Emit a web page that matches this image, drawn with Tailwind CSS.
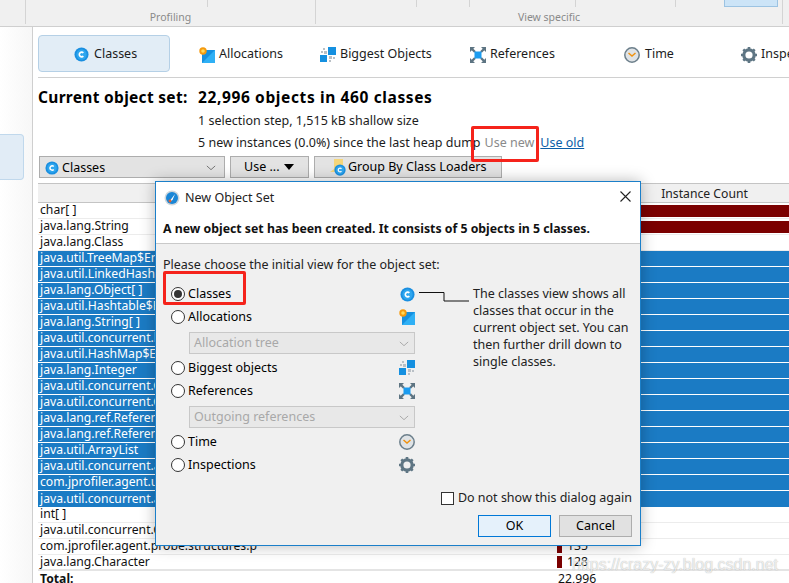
<!DOCTYPE html>
<html><head><meta charset="utf-8"><script src="https://cdn.jsdelivr.net/npm/@tailwindcss/browser@4"></script></head>
<body class="relative w-[789px] h-[583px] overflow-hidden bg-white font-['Noto_Sans','Open_Sans',sans-serif] text-[12.5px] leading-none text-black">
<svg class="hidden"><defs>
<symbol id="c" viewBox="0 0 16 16"><circle cx="8" cy="8" r="7.5" fill="#1a8fe0"/><circle cx="8" cy="8" r="5.5" fill="#2ea6ee"/><path d="M10 6.3A2.5 2.5 0 1 0 10 9.7" fill="none" stroke="#fff" stroke-width="1.7"/></symbol>
<symbol id="a" viewBox="0 0 16 16"><rect x="3" y="3" width="13" height="13" fill="#1590e0"/><path d="M16 3V16H3Z" fill="#2fb0f5"/><circle cx="4" cy="4" r="3.7" fill="#f59a0e"/><circle cx="4" cy="4" r="1.8" fill="#ffd95a"/></symbol>
<symbol id="b" viewBox="0 0 16 16"><rect x="8" y="0" width="8" height="8" fill="#1590e0"/><rect x="0" y="8" width="7" height="7" fill="#1590e0"/><g fill="#b9c0c6"><rect x="3" y="1" width="2" height="2"/><rect x="1" y="4" width="2" height="2"/><rect x="4" y="4" width="3" height="3"/><rect x="9" y="9" width="3" height="3"/><rect x="13" y="10" width="2" height="2"/><rect x="9" y="13" width="2" height="2"/></g></symbol>
<symbol id="r" viewBox="0 0 16 16"><g stroke="#5d7482" stroke-width="2.4" fill="none"><path d="M1 1L5 5M15 1L11 5M1 15L5 11M15 15L11 11"/></g><g fill="#5d7482"><path d="M0 0H5L0 5ZM16 0H11L16 5ZM0 16H5L0 11ZM16 16H11L16 11Z"/></g><rect x="4.5" y="4.5" width="7" height="7" fill="#1b9cf0"/></symbol>
<symbol id="t" viewBox="0 0 16 16"><circle cx="8" cy="8" r="7.2" fill="#dfe3e6" stroke="#6c7f8b" stroke-width="1.5"/><path d="M4.5 6L8 9L11.5 6" fill="none" stroke="#f0920f" stroke-width="1.5"/></symbol>
<symbol id="g" viewBox="0 0 16 16"><circle cx="8" cy="8" r="5.2" fill="none" stroke="#5f7684" stroke-width="3.2"/><g stroke="#5f7684" stroke-width="2.6"><path d="M8 0V3M8 13V16M0 8H3M13 8H16M2.3 2.3L4.4 4.4M11.6 11.6L13.7 13.7M13.7 2.3L11.6 4.4M4.4 11.6L2.3 13.7"/></g></symbol>
<symbol id="v" viewBox="0 0 12 7"><path d="M1 1L6 5.5L11 1" fill="none" stroke="currentColor" stroke-width="1.2"/></symbol>
</defs></svg>

<!-- top ribbon -->
<header class="h-[27px] bg-[#f0f0f0] border-b border-[#cfcfcf] flex text-[10.5px] text-[#8a8a8a]">
  <div class="w-[26px] shrink-0 h-6 border-r border-[#d4d4d4]"></div>
  <div class="w-[290px] shrink-0 h-6 border-r border-[#d4d4d4] relative text-center pt-[12px]"><span>Profiling</span><i class="absolute left-[181px] top-0 h-[7px] border-r border-[#d4d4d4]"></i></div>
  <div class="w-[467px] shrink-0 h-6 border-r border-[#d4d4d4] relative text-center pt-[12px]"><span>View specific</span><i class="absolute left-[100px] top-0 h-[7px] border-r border-[#d4d4d4]"></i><i class="absolute left-[153px] top-0 h-[7px] border-r border-[#d4d4d4]"></i><i class="absolute left-[259px] top-0 h-[7px] border-r border-[#d4d4d4]"></i><i class="absolute left-[359px] top-0 h-[7px] border-r border-[#d4d4d4]"></i><i class="absolute left-[408px] top-0 w-[54px] h-[7px] bg-[#cce4f7] border border-t-0 border-[#9cc3e2]"></i></div>
</header>

<div class="flex h-[556px]">
  <!-- sidebar -->
  <aside class="w-[33px] shrink-0 border-r border-[#cfcfcf] bg-gradient-to-r from-white to-[#f7f7f7] pt-[107px]">
    <div class="w-6 h-[46px] bg-[#e1ecf6] border border-l-0 border-[#c0d8ec] rounded-r-sm"></div>
  </aside>

  <main class="flex-1 min-w-0 pl-[5px] pt-2">
    <!-- tabs -->
    <nav class="flex items-center h-[37px] text-[#1c1c1c] whitespace-nowrap">
      <div class="w-[132px] shrink-0 h-[37px] pt-[2px] bg-[#e2edf6] border border-[#b5d0e6] rounded-sm flex items-center pl-[35px] gap-[5px]"><svg class="w-[15px] h-[15px]"><use href="#c"/></svg>Classes</div>
      <div class="ml-[29px] w-[121px] pt-[2px] shrink-0 flex items-center gap-1"><svg class="w-4 h-4"><use href="#a"/></svg>Allocations</div>
      <div class="flex items-center pt-[2px] gap-[4px] w-[150px] shrink-0"><svg class="w-4 h-4"><use href="#b"/></svg>Biggest Objects</div>
      <div class="flex items-center pt-[2px] gap-1 w-[154px] shrink-0"><svg class="w-4 h-4"><use href="#r"/></svg>References</div>
      <div class="flex items-center pt-[2px] gap-[5px] w-[117px] shrink-0"><svg class="w-4 h-4"><use href="#t"/></svg>Time</div>
      <div class="flex items-center pt-[2px] gap-1 shrink-0"><svg class="w-4 h-4 shrink-0"><use href="#g"/></svg>Inspections</div>
    </nav>
    <div class="mt-[5px] border-t border-[#d0d0d0] w-[800px]"></div>

    <!-- summary -->
    <div class="flex mt-[12px] font-bold text-[15.5px] h-[16px] items-center whitespace-nowrap"><span class="w-[160px] tracking-[0.3px]">Current object set:</span><span class="tracking-[0.62px]">22,996 objects in 460 classes</span></div>
    <div class="ml-[160px] mt-[5px] h-[21px] flex items-center text-[#1c1c1c]">1 selection step, 1,515 kB shallow size</div>
    <div class="ml-[160px] h-[21px] pt-[2px] flex items-center text-[#1c1c1c] whitespace-nowrap">5 new instances (0.0%) since the last heap dump<span class="ml-[4px] text-[#8a8a8a]">Use new</span><span class="ml-[6px] text-[#0b5ea8] underline">Use old</span></div>

    <!-- controls -->
    <div class="flex mt-[3px] h-[22px] gap-[5px]">
      <div class="w-[186px] ml-px pt-[2px] bg-[#e3e3e3] border border-[#adadad] flex items-center pl-[5px] gap-[3px]"><svg class="w-[14px] h-[14px]"><use href="#c"/></svg>Classes<svg class="ml-auto mr-2 w-[10px] h-[6px] text-[#777]"><use href="#v"/></svg></div>
      <div class="w-[79px] bg-[#e3e3e3] border border-[#adadad] flex items-center pl-[13px] gap-[5px]">Use ...<span class="w-0 h-0 border-x-[5px] border-x-transparent border-t-[6px] border-t-black"></span></div>
      <div class="w-[188px] bg-[#e3e3e3] border border-[#adadad] flex items-center pl-[14px] gap-[1px] whitespace-nowrap"><svg class="w-[18px] h-[18px]" viewBox="0 0 18 18"><path d="M5 1H14V14H1L5 11Z" fill="#f5d67b"/><use href="#c" x="5" y="6" width="12" height="12"/></svg>Group By Class Loaders</div>
    </div>

    <!-- table -->
    <section class="mt-[5px] w-[830px] text-[12.2px] text-[#111]">
      <div class="flex h-5 pt-[2px] bg-[#f0f0f0] border-y border-[#c4c4c4] items-center"><div class="w-[519px] shrink-0"></div><div class="w-[295px] shrink-0 text-center text-[#222]">Instance Count</div></div>
      <div class="flex h-4 border-b border-[#ececec] items-center"><div class="w-[519px] shrink-0 pl-[2px]">char[ ]</div><div class="flex-1 h-3 bg-[#7b0000]"></div></div>
      <div class="flex h-4 border-b border-[#ececec] items-center"><div class="w-[519px] shrink-0 pl-[2px]">java.lang.String</div><div class="flex-1 h-3 bg-[#7b0000]"></div></div>
      <div class="flex h-4 border-b border-[#ececec] items-center"><div class="w-[519px] shrink-0 pl-[2px]">java.lang.Class</div></div>
      <div class="text-white">
        <div class="h-4 bg-[#1b7bc4] border-b border-white pl-[2px] flex items-center">java.util.TreeMap$Entry</div>
        <div class="h-4 bg-[#1b7bc4] border-b border-white pl-[2px] flex items-center">java.util.LinkedHashMap$Entry</div>
        <div class="h-4 bg-[#1b7bc4] border-b border-white pl-[2px] flex items-center">java.lang.Object[ ]</div>
        <div class="h-4 bg-[#1b7bc4] border-b border-white pl-[2px] flex items-center">java.util.Hashtable$Entry</div>
        <div class="h-4 bg-[#1b7bc4] border-b border-white pl-[2px] flex items-center">java.lang.String[ ]</div>
        <div class="h-4 bg-[#1b7bc4] border-b border-white pl-[2px] flex items-center">java.util.concurrent.locks</div>
        <div class="h-4 bg-[#1b7bc4] border-b border-white pl-[2px] flex items-center">java.util.HashMap$Entry</div>
        <div class="h-4 bg-[#1b7bc4] border-b border-white pl-[2px] flex items-center">java.lang.Integer</div>
        <div class="h-4 bg-[#1b7bc4] border-b border-white pl-[2px] flex items-center">java.util.concurrent.Concurrent</div>
        <div class="h-4 bg-[#1b7bc4] border-b border-white pl-[2px] flex items-center">java.util.concurrent.Concurrent</div>
        <div class="h-4 bg-[#1b7bc4] border-b border-white pl-[2px] flex items-center">java.lang.ref.Reference</div>
        <div class="h-4 bg-[#1b7bc4] border-b border-white pl-[2px] flex items-center">java.lang.ref.Reference</div>
        <div class="h-4 bg-[#1b7bc4] border-b border-white pl-[2px] flex items-center">java.util.ArrayList</div>
        <div class="h-4 bg-[#1b7bc4] border-b border-white pl-[2px] flex items-center">java.util.concurrent.atomic</div>
        <div class="h-4 bg-[#1b7bc4] border-b border-white pl-[2px] flex items-center">com.jprofiler.agent.util</div>
        <div class="h-4 bg-[#1b7bc4] pl-[2px] flex items-center">java.util.concurrent.atomic</div>
      </div>
      <div class="flex h-4 border-b border-[#ececec] items-center"><div class="w-[519px] shrink-0 pl-[2px]">int[ ]</div></div>
      <div class="flex h-4 border-b border-[#ececec] items-center"><div class="w-[519px] shrink-0 pl-[2px]">java.util.concurrent.Concurrent</div></div>
      <div class="flex h-4 border-b border-[#ececec] items-center"><div class="w-[519px] shrink-0 pl-[2px]">com.jprofiler.agent.probe.structures.p</div><div class="w-[5px] h-3 bg-[#7b0000]"></div><div class="ml-[5px]">135</div></div>
      <div class="flex h-4 border-b-2 border-[#e4e4e4] items-center"><div class="w-[519px] shrink-0 pl-[2px]">java.lang.Character</div><div class="w-[5px] h-3 bg-[#7b0000]"></div><div class="ml-[5px]">128</div></div>
      <div class="flex h-4 items-center font-bold"><div class="w-[519px] shrink-0 pl-[2px]">Total:</div><div class="font-normal ml-px">22,996</div></div>
    </section>
  </main>
</div>

<!-- dialog -->
<div class="absolute left-[155px] top-[181px] w-[486px] h-[365px] bg-[#f0f0f0] border border-[#1b7fc9] shadow-[0_0_14px_rgba(0,0,0,0.28)] flex flex-col">
  <div class="bg-white h-[62px] border-b border-[#c9c9c9] shrink-0 px-[7px]">
    <div class="h-[30px] pt-[2px] flex items-center gap-[5px] relative">
      <svg class="w-4 h-4 ml-px" viewBox="0 0 16 16"><circle cx="8" cy="8" r="7.5" fill="#cfd6db"/><circle cx="8" cy="8" r="6" fill="#1a86d6"/><path d="M5 12L11 4L8.5 10Z" fill="#fff"/><circle cx="6" cy="11" r="1.4" fill="#e8602c"/></svg>
      <span class="text-[12.5px] text-[#222]">New Object Set</span>
      <svg class="absolute right-[2px] top-[9px] w-[11px] h-[11px]" viewBox="0 0 11 11"><path d="M.5.5L10.5 10.5M10.5.5L.5 10.5" stroke="#222" stroke-width="1.1"/></svg>
    </div>
    <div class="font-bold text-[12.3px] mt-[11px] text-[#111] whitespace-nowrap">A new object set has been created. It consists of 5 objects in 5 classes.</div>
  </div>
  <div class="flex-1 px-[7px] relative">
    <div class="mt-[15px] text-[#222]">Please choose the initial view for the object set:</div>
    <div class="mt-[11px] flex gap-[58px]">
      <div class="w-[252px] pl-[8px] shrink-0">
        <div class="h-[23px] flex items-center gap-[3px]"><span class="w-[14px] h-[14px] rounded-full border border-[#333] bg-white flex items-center justify-center"><span class="w-2 h-2 rounded-full bg-[#333]"></span></span>Classes<svg class="ml-auto w-[15px] h-[15px]"><use href="#c"/></svg></div>
        <div class="h-[23px] flex items-center gap-[3px]"><span class="w-[14px] h-[14px] rounded-full border border-[#333] bg-white"></span>Allocations<svg class="ml-auto w-4 h-4"><use href="#a"/></svg></div>
        <div class="ml-[18px] mt-[3px] h-[22px] pt-[2px] bg-[#e8e8e8] border border-[#c8c8c8] flex items-center pl-[4px] text-[#a8a8a8]">Allocation tree<svg class="ml-auto mr-[5px] w-[10px] h-[6px] text-[#aaa]"><use href="#v"/></svg></div>
        <div class="h-[23px] mt-[3px] flex items-center gap-[3px]"><span class="w-[14px] h-[14px] rounded-full border border-[#333] bg-white"></span>Biggest objects<svg class="ml-auto w-4 h-4"><use href="#b"/></svg></div>
        <div class="h-[23px] flex items-center gap-[3px]"><span class="w-[14px] h-[14px] rounded-full border border-[#333] bg-white"></span>References<svg class="ml-auto w-4 h-4"><use href="#r"/></svg></div>
        <div class="ml-[18px] mt-[3px] h-[22px] pt-[2px] bg-[#e8e8e8] border border-[#c8c8c8] flex items-center pl-[4px] text-[#a8a8a8]">Outgoing references<svg class="ml-auto mr-[5px] w-[10px] h-[6px] text-[#aaa]"><use href="#v"/></svg></div>
        <div class="h-[23px] mt-[3px] flex items-center gap-[3px]"><span class="w-[14px] h-[14px] rounded-full border border-[#333] bg-white"></span>Time<svg class="ml-auto w-4 h-4"><use href="#t"/></svg></div>
        <div class="h-[23px] flex items-center gap-[3px]"><span class="w-[14px] h-[14px] rounded-full border border-[#333] bg-white"></span>Inspections<svg class="ml-auto w-4 h-4"><use href="#g"/></svg></div>
      </div>
      <p class="w-[162px] text-[#222] leading-[17px] mt-[2px]">The classes view shows all classes that occur in the current object set. You can then further drill down to single classes.</p>
    </div>
    <svg class="absolute left-[263px] top-[47px] w-[52px] h-[12px]" viewBox="0 0 52 12"><path d="M0 1.5H25V10H50" fill="none" stroke="#111"/></svg>
    <div class="absolute right-[8px] bottom-[40px] flex items-center gap-1 text-[#222]"><span class="w-[13px] h-[13px] bg-white border border-[#333]"></span>Do not show this dialog again</div>
    <div class="absolute right-[8px] bottom-[8px] flex gap-2">
      <div class="w-[73px] h-[22px] bg-[#e5f1fb] border border-[#0078d7] flex items-center justify-center">OK</div>
      <div class="w-[73px] h-[22px] bg-[#e1e1e1] border border-[#adadad] flex items-center justify-center">Cancel</div>
    </div>
  </div>
</div>

<!-- annotations -->
<div class="absolute left-[471px] top-[126px] w-[68px] h-[36px] border-[3px] border-[#f5231b] rounded-[2px]"></div>
<div class="absolute left-[163px] top-[271px] w-[83px] h-[34px] border-[3px] border-[#f5231b] rounded-[2px]"></div>
<div class="absolute left-[572px] top-[557px] text-[16px] font-['Liberation_Sans',sans-serif] text-white/75 [text-shadow:0_0_1px_rgba(0,0,0,0.35)] whitespace-nowrap">https://crazy-zy.blog.csdn.net</div>
</body></html>
